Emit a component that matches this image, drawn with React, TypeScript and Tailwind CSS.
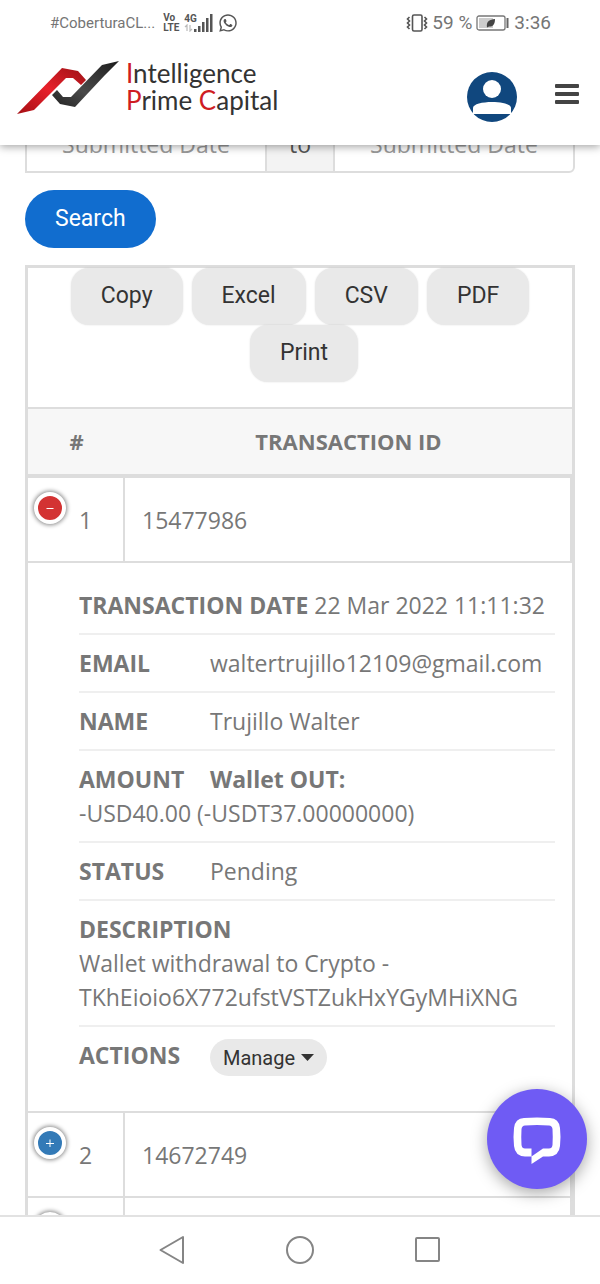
import type { ReactNode } from 'react';
import { FaWhatsapp } from 'react-icons/fa';

const exportButtons = ['Copy', 'Excel', 'CSV', 'PDF'];

function StatusBar() {
  return (
    <div className="flex h-[45px] items-center justify-between pr-[49px] pl-[50px] font-[Roboto,sans-serif] text-[#757575]">
      <div className="flex items-center">
        <span className="text-[15px]">#CoberturaCL...</span>
        <span className="ml-[8px] flex flex-col text-[10px] leading-[10px] font-bold text-[#555]">
          <span>Vo</span>
          <span>LTE</span>
        </span>
        {/* Mobile signal */}
        <span className="ml-[5px] flex items-end">
          <span className="flex flex-col text-[10px] leading-[10px] font-bold text-[#555]">
            <span>4G</span>
            <svg width="9" height="8" viewBox="0 0 9 8" fill="none" stroke="#bbb" strokeWidth="1.2">
              <path d="M3 7V1L1 3M6 1v6l2-2" />
            </svg>
          </span>
          <svg className="-ml-[3px]" width="19" height="18" viewBox="0 0 19 18" fill="#555">
            <path d="M0 15h2.5v3H0zM4 12h2.5v6H4zM8 8h2.5v10H8zM12 4h2.5v14H12zM16 0h2.5v18H16z" />
          </svg>
        </span>
        <FaWhatsapp className="ml-[5px] size-5 text-[#555]" />
      </div>

      <div className="flex items-center text-[19px]">
        <svg width="22" height="18" viewBox="0 0 22 18" fill="none" stroke="#555" strokeWidth="1.6">
          <rect x="6.5" y="1" width="9.500" height="16" rx="1.5" />
          <path d="M3.500 3L1.500 5l2 2-2 2 2 2-2 2 2 2M18.500 3l2 2-2 2 2 2-2 2 2 2-2 2" />
        </svg>
        <span className="ml-1">59 %</span>
        <svg className="ml-1" width="33" height="16" viewBox="0 0 33 16">
          <rect x="1" y="1" width="28" height="14" rx="2" fill="#fff" stroke="#777" strokeWidth="1.3" />
          <rect x="3" y="3" width="14" height="10" fill="#ccc" />
          <path d="M11 12.500C10 6 14 4.500 19 4c0 5-2 8-6 7.500z" fill="#444" />
          <rect x="30.500" y="3" width="2" height="10" fill="#666" />
        </svg>
        <span className="ml-[5px]">3:36</span>
      </div>
    </div>
  );
}

function Logo() {
  return (
    <a href="#" className="flex items-start text-[#333]">
      <svg width="103" height="56" viewBox="0 0 103 56" aria-hidden="true">
        <defs>
          <linearGradient id="logoRed" x1="0" y1="1" x2="1" y2="0">
            <stop offset="0" stopColor="#a50f14" />
            <stop offset="0.5" stopColor="#e8202a" />
            <stop offset="1" stopColor="#9c1216" />
          </linearGradient>
          <linearGradient id="logoDark" x1="0" y1="1" x2="1" y2="0">
            <stop offset="0" stopColor="#222" />
            <stop offset="0.4" stopColor="#4a4a4a" />
            <stop offset="1" stopColor="#1d1d1d" />
          </linearGradient>
        </defs>
        <path d="M0 54L45 8l16 3 8 9-5 5-8-7h-7L17 50z" fill="url(#logoRed)" />
        <path d="M102 1L85 5 54 37h-8l-6-7-5 5 8 9 15 3 30-32z" fill="url(#logoDark)" />
      </svg>
      <span className="ml-[6px] flex flex-col font-[Lato,sans-serif] text-[26px] leading-[27px]">
        <span>
          <span className="text-[#cf1c22]">I</span>ntelligence
        </span>
        <span>
          <span className="text-[#cf1c22]">P</span>rime <span className="text-[#cf1c22]">C</span>apital
        </span>
      </span>
    </a>
  );
}

function Header() {
  return (
    <header className="relative z-10 bg-white shadow-[0_2px_8px_rgba(0,0,0,0.35)]">
      <StatusBar />
      <div className="flex h-[100px] items-start pt-[15px] pr-[21px] pl-[17px]">
        <Logo />
        <button type="button" aria-label="Account" className="mt-[12px] ml-auto">
          <svg width="50" height="50" viewBox="0 0 50 50">
            <circle cx="25" cy="25" r="25" fill="#10477e" />
            <circle cx="25" cy="17" r="9" fill="#fff" />
            <path d="M6 42v-6c0-8 38-8 38 0v6z" fill="#fff" />
          </svg>
        </button>
        <button type="button" aria-label="Menu" className="mt-[24px] ml-[38px]">
          <svg width="24" height="20" viewBox="0 0 24 20" fill="#444">
            <rect width="24" height="4" rx="1" />
            <rect y="8" width="24" height="4" rx="1" />
            <rect y="16" width="24" height="4" rx="1" />
          </svg>
        </button>
      </div>
    </header>
  );
}

function DateRange() {
  return (
    <div className="-mt-[30px] flex h-[58px]">
      <input
        type="text"
        aria-label="Submitted date from"
        placeholder="Submitted Date"
        className="w-0 flex-1 border-2 border-[#ddd] bg-white text-center text-[23px] placeholder:text-[#999]"
      />
      <span className="flex w-[66px] items-center justify-center border-y-2 border-[#ddd] bg-[#f3f3f3] text-[23px] text-[#555]">
        to
      </span>
      <input
        type="text"
        aria-label="Submitted date to"
        placeholder="Submitted Date"
        className="w-0 flex-1 rounded-r-md border-2 border-[#ddd] bg-white text-center text-[23px] placeholder:text-[#999]"
      />
    </div>
  );
}

function ExportButton({ label }: { label: string }) {
  return (
    <button
      type="button"
      className="h-[57px] rounded-[18px] bg-[#e9e9e9] px-[30px] pb-[2px] font-[Roboto,sans-serif] text-[23px] text-[#333] shadow-[0_0_2px_rgba(0,0,0,0.12)]"
    >
      {label}
    </button>
  );
}

function RowToggle({ open }: { open?: boolean }) {
  return (
    <button
      type="button"
      aria-label={open ? 'Collapse row' : 'Expand row'}
      className={`flex size-8 shrink-0 items-center justify-center rounded-full border-4 border-white text-white shadow-[0_0_4px_1px_#888] ${
        open ? 'bg-[#d33333]' : 'bg-[#337ab7]'
      }`}
    >
      <svg width="8" height="8" viewBox="0 0 8 8" stroke="currentColor" strokeWidth="1">
        <path d={open ? 'M.5 4.500h7' : 'M0 4.500h8M4 .5v8'} />
      </svg>
    </button>
  );
}

function TransactionRow({ index, id, open }: { index?: number; id?: string; open?: boolean }) {
  return (
    <tr>
      <td className="h-[85px] border-r-2 border-b-2 border-[#ddd] p-0 align-top">
        <div className="flex items-start gap-[13px] pt-[14px] pl-[6px]">
          <RowToggle open={open} />
          <span className="pt-[11px]">{index}</span>
        </div>
      </td>
      <td className="border-r-2 border-b-2 border-[#ddd] px-[17px]">{id}</td>
    </tr>
  );
}

function Detail({ label, children }: { label: string; children: ReactNode }) {
  return (
    <li className="border-b-2 border-[#efefef] py-[11px] last:border-b-0">
      <span className="inline-block min-w-[125px] font-bold">{label}</span> {children}
    </li>
  );
}

function TransactionDetails() {
  return (
    <tr>
      <td colSpan={2} className="border-b-2 border-[#ddd] pt-[14px] pr-[17px] pb-[24px] pl-[51px]">
        <ul>
          <Detail label="TRANSACTION DATE">22 Mar 2022 11:11:32</Detail>
          <Detail label="EMAIL">waltertrujillo12109@gmail.com</Detail>
          <Detail label="NAME">Trujillo Walter</Detail>
          <Detail label="AMOUNT">
            <b>Wallet OUT:</b>
            <br />
            -USD40.00 (-USDT37.00000000)
          </Detail>
          <Detail label="STATUS">Pending</Detail>
          <Detail label="DESCRIPTION">
            <br />
            Wallet withdrawal to Crypto -
            <br />
            TKhEioio6X772ufstVSTZukHxYGyMHiXNG
          </Detail>
          <Detail label="ACTIONS">
            <button
              type="button"
              className="inline-flex h-[37px] items-center gap-[6px] rounded-full bg-[#e9e9e9] px-[13px] align-middle font-[Roboto,sans-serif] text-[20px] text-[#333]"
            >
              Manage
              <svg width="13" height="7" viewBox="0 0 13 7" fill="currentColor">
                <path d="M0 0h13L6.500 7z" />
              </svg>
            </button>
          </Detail>
        </ul>
      </td>
    </tr>
  );
}

function ChatButton() {
  return (
    <button
      type="button"
      aria-label="Open chat"
      className="absolute right-[13px] bottom-[26px] size-[100px] rounded-full bg-[#6f5bf4] shadow-[0_4px_16px_rgba(0,0,0,0.35)]"
    >
      <svg width="100" height="100" viewBox="0 0 100 100" fill="#fff">
        <path
          fillRule="evenodd"
          d="M37 29Q50 28 63 29Q72 29.500 73 39Q74 48 73 57Q72 67 62 67.500H56L44.500 75V67.500H38Q28 67 27 57Q26 48 27 39Q28 29.500 37 29ZM38 36.500Q35 36.500 34.500 40Q34 48 34.500 56Q35 59.500 38 59.500H44.500V67.500L56 59.500H62Q65 59.500 65.500 56Q66 48 65.500 40Q65 36.500 62 36.500Q50 35.500 38 36.500Z"
        />
      </svg>
    </button>
  );
}

function SystemNav() {
  return (
    <nav className="flex h-[69px] shrink-0 items-center justify-center gap-24 border-t-2 border-[#e2e2e2] bg-white pb-[2px] text-[#858585]">
      <button type="button" aria-label="Back">
        <svg width="32" height="32" viewBox="0 0 32 32" fill="none" stroke="currentColor" strokeWidth="2" strokeLinejoin="round">
          <path d="M27 3v26L4.500 16z" />
        </svg>
      </button>
      <button type="button" aria-label="Home">
        <svg width="32" height="32" viewBox="0 0 32 32" fill="none" stroke="currentColor" strokeWidth="2">
          <circle cx="16" cy="16" r="13" />
        </svg>
      </button>
      <button type="button" aria-label="Recent apps">
        <svg width="32" height="32" viewBox="0 0 32 32" fill="none" stroke="currentColor" strokeWidth="2">
          <rect x="4" y="4" width="23" height="23" rx="1" />
        </svg>
      </button>
    </nav>
  );
}

export default function App() {
  return (
    <div className="flex h-screen flex-col overflow-hidden bg-white font-['Open_Sans',sans-serif] text-[23px] leading-[34px] text-[#777]">
      <Header />

      <main className="relative min-h-0 flex-1 overflow-hidden px-[25px]">
        <DateRange />

        <button
          type="button"
          className="mt-[17px] block h-[58px] rounded-full bg-[#116dcf] px-[30px] font-[Roboto,sans-serif] text-[23px] text-white"
        >
          Search
        </button>

        <section className="mt-[17px] border-3 border-[#ddd]">
          {/* Export tools */}
          <div className="flex flex-wrap justify-center gap-x-[9px] px-[40px] pb-[25px]">
            {exportButtons.map((label) => (
              <ExportButton key={label} label={label} />
            ))}
            <div className="ml-2">
              <ExportButton label="Print" />
            </div>
          </div>

          <table className="w-full table-fixed border-separate border-spacing-0">
            <thead>
              <tr className="bg-[#f7f7f7] text-[22px]">
                <th className="h-[71px] w-[97px] border-t-2 border-b-4 border-[#ddd] p-0 pb-[2px]">#</th>
                <th className="border-t-2 border-b-4 border-[#ddd] p-0 pb-[2px]">TRANSACTION ID</th>
              </tr>
            </thead>
            <tbody>
              <TransactionRow index={1} id="15477986" open />
              <TransactionDetails />
              <TransactionRow index={2} id="14672749" />
              <TransactionRow />
            </tbody>
          </table>
        </section>

        <ChatButton />
      </main>

      <SystemNav />
    </div>
  );
}
